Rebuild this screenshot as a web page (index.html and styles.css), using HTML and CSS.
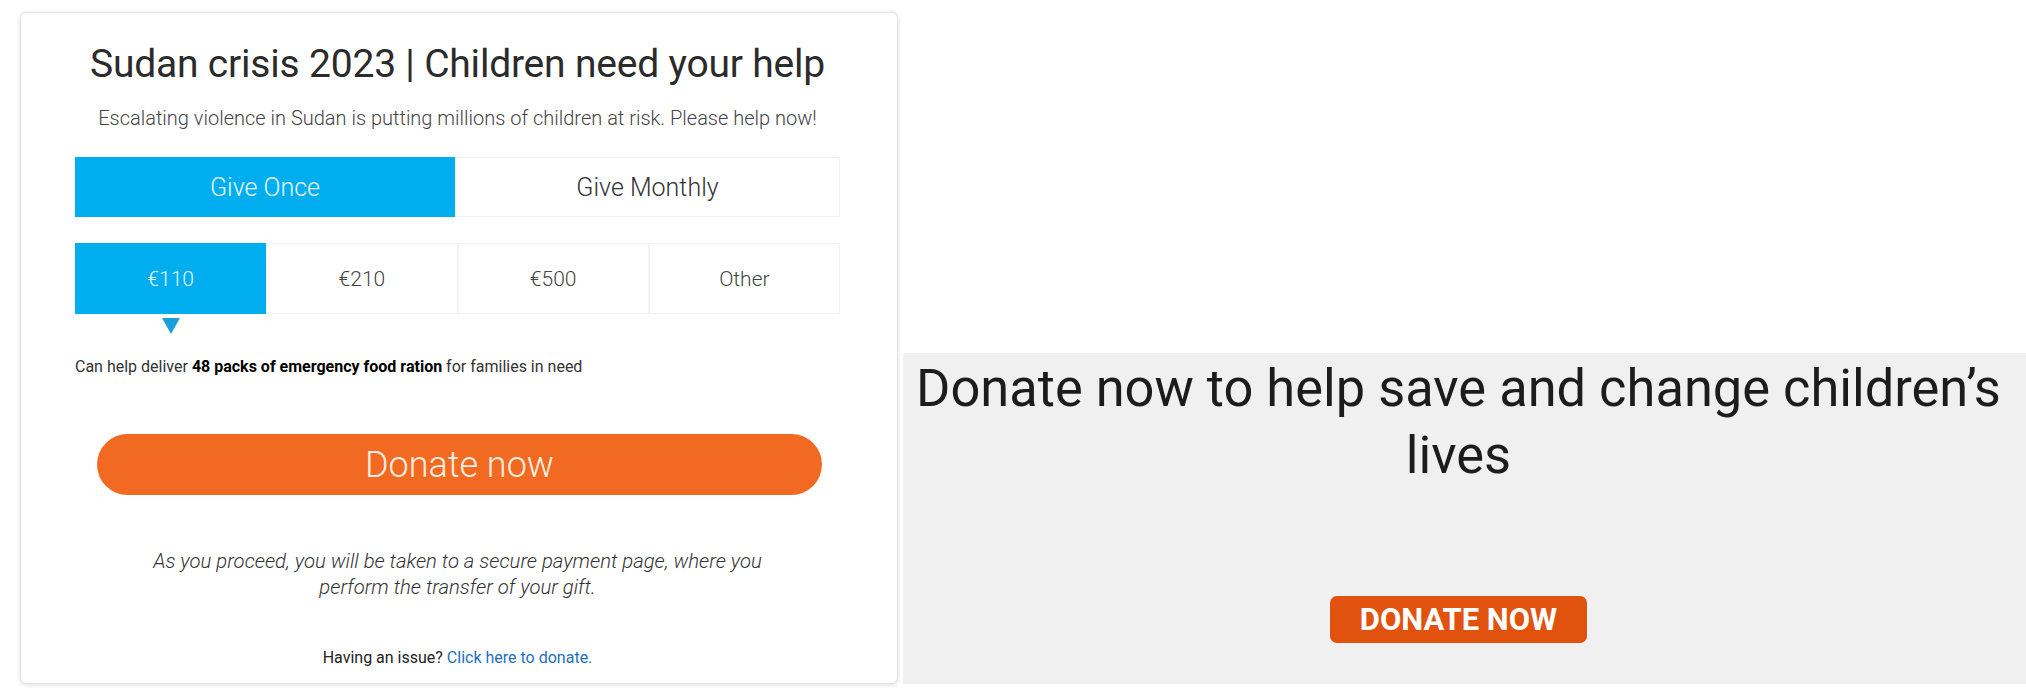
FILE: index.html
```html
<!DOCTYPE html>
<html lang="en">
<head>
<meta charset="utf-8">
<title>Sudan crisis 2023 | Donate</title>
<link rel="stylesheet" href="styles.css">
</head>
<body>
<div class="page">
  <section class="card">
    <h1 class="title">Sudan crisis 2023 | Children need your help</h1>
    <p class="subtitle">Escalating violence in Sudan is putting millions of children at risk. Please help now!</p>
    <div class="tabs">
      <button class="tab active">Give Once</button>
      <button class="tab">Give Monthly</button>
    </div>
    <div class="amounts">
      <button class="amt active">€110</button>
      <button class="amt">€210</button>
      <button class="amt">€500</button>
      <button class="amt">Other</button>
    </div>
    <p class="impact">Can help deliver <b>48 packs of emergency food ration</b> for families in need</p>
    <button class="donate">Donate now</button>
    <p class="note">As you proceed, you will be taken to a secure payment page, where you perform the transfer of your gift.</p>
    <p class="issue">Having an issue? <a href="#">Click here to donate.</a></p>
  </section>
  <section class="panel">
    <h2 class="panel-title">Donate now to help save and change children’s lives</h2>
    <button class="panel-btn">DONATE NOW</button>
  </section>
</div>
</body>
</html>
```
FILE: styles.css
```css
* { box-sizing: border-box; }
html, body { margin: 0; padding: 0; background: #ffffff; }
body { font-family: Roboto, "Liberation Sans", Arial, sans-serif; color: #333; }

.page {
  display: flex;
  align-items: flex-end;
  gap: 5px;
  padding: 12px 0 13px 20px;
  width: 2026px;
  height: 697px;
}

.card {
  width: 878px;
  height: 672px;
  flex: none;
  display: flex;
  flex-direction: column;
  border: 1px solid #e4e4e4;
  border-radius: 6px;
  box-shadow: 0 1px 4px rgba(0,0,0,0.14);
  padding: 30px 57px 0 54px;
  background: #fff;
}

.title {
  margin: 0;
  font-size: 39px;
  font-weight: 400;
  line-height: 42px;
  color: #2b2b2b;
  text-align: center;
  letter-spacing: -0.2px;
}

.subtitle {
  margin: 21px 0 0;
  font-size: 20px;
  font-weight: 300;
  line-height: 24px;
  color: #444;
  text-align: center;
}

.tabs {
  display: grid;
  grid-template-columns: 380px 1fr;
  margin-top: 27px;
  height: 60px;
}

.tab {
  font: inherit;
  font-size: 25px;
  font-weight: 300;
  color: #333;
  background: #fff;
  border: 1px solid #f1f1f1;
  cursor: pointer;
}
.tab.active {
  background: #00aeef;
  border-color: #00aeef;
  color: #e9f8ff;
}

.amounts {
  display: grid;
  grid-template-columns: repeat(4, 1fr);
  margin-top: 26px;
  height: 71px;
}

.amt {
  position: relative;
  font: inherit;
  font-size: 21px;
  font-weight: 300;
  color: #444;
  background: #fff;
  border: 1px solid #f3f3f3;
  cursor: pointer;
}
.amt.active {
  background: #00aeef;
  border-color: #00aeef;
  color: #e9f8ff;
}
.amt.active::after {
  content: "";
  position: absolute;
  left: 50%;
  top: calc(100% + 5px);
  margin-left: -9px;
  border-left: 9px solid transparent;
  border-right: 9px solid transparent;
  border-top: 16px solid #1a9fd9;
}

.impact {
  margin: 43px 0 0;
  font-size: 16px;
  line-height: 20px;
  color: #333;
}
.impact b { color: #000; font-weight: 700; }

.donate {
  margin: 57px 0 0 22px;
  width: 725px;
  height: 61px;
  border: none;
  border-radius: 31px;
  background: #f26a21;
  color: #fdeee3;
  font: inherit;
  font-size: 36px;
  font-weight: 300;
  cursor: pointer;
}

.note {
  margin: 53px auto 0;
  max-width: 650px;
  font-size: 20.3px;
  font-style: italic;
  font-weight: 300;
  line-height: 26px;
  color: #333;
  text-align: center;
}

.issue {
  margin: 48px 0 0;
  font-size: 16px;
  line-height: 20px;
  color: #222;
  text-align: center;
}
.issue a { color: #1f6fc0; text-decoration: none; }

.panel {
  width: 1123px;
  height: 331px;
  flex: none;
  display: flex;
  flex-direction: column;
  align-items: center;
  background: #f0f0f0;
  padding: 2px 12px 41px 0;
}

.panel-title {
  margin: 0;
  font-size: 52.4px;
  font-weight: 400;
  line-height: 67px;
  color: #1c1c1c;
  text-align: center;
}

.panel-btn {
  margin-top: auto;
  width: 257px;
  height: 47px;
  border: none;
  border-radius: 7px;
  background: #e1520f;
  color: #fff;
  font: inherit;
  font-size: 31px;
  font-weight: 700;
  cursor: pointer;
}
```
